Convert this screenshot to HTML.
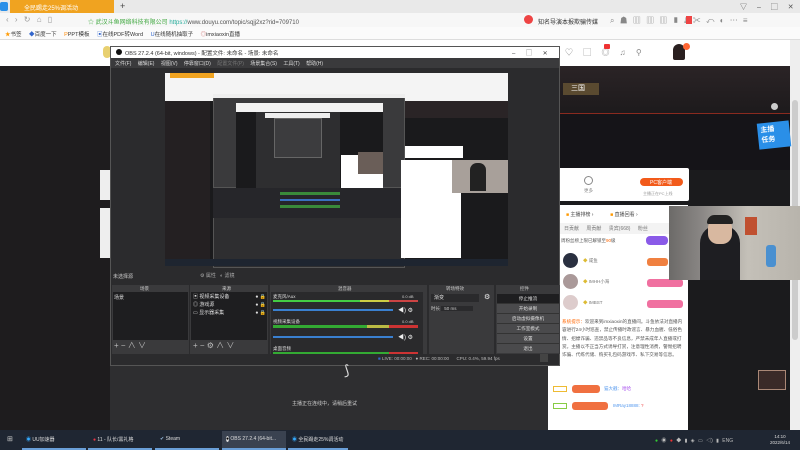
<!DOCTYPE html>
<html><head><meta charset="utf-8"><style>
*{margin:0;padding:0;box-sizing:border-box}
body{width:800px;height:450px;overflow:hidden;position:relative;background:#1b1b1d;font-family:"Liberation Sans","Noto Sans CJK SC",sans-serif;font-size:6px;color:#ccc}
.a{position:absolute}
.t{white-space:nowrap}
</style></head><body>
<!-- tab bar -->
<div class="a" style="left:0;top:0;width:800px;height:13px;background:#e9e9e9"></div>
<div class="a" style="left:0;top:2px;width:8px;height:9px;background:#2a8fe8;border-radius:2px"></div>
<div class="a t" style="left:10px;top:0;width:104px;height:13px;background:#f0a320;color:#fff;padding:3px 0 0 14px">全民踢走25%调活动</div>
<div class="a t" style="left:120px;top:1px;color:#444;font-size:9px">+</div>
<div class="a t" style="left:740px;top:2px;color:#555;font-size:7px;word-spacing:8px">▽ – ▢ ✕</div>
<!-- address bar -->
<div class="a" style="left:0;top:13px;width:800px;height:14px;background:#f7f7f7"></div>
<div class="a t" style="left:6px;top:15px;color:#999;font-size:8px;word-spacing:4px">‹ › ↻ ⌂ ▯</div>
<div class="a t" style="left:88px;top:17px;color:#4a4">☆ 武汉斗鱼网络科技有限公司 <span style="color:#2a9">https://</span><span style="color:#555">www.douyu.com/topic/sqjj2xz?rid=709710</span></div>
<div class="a" style="left:524px;top:15px;width:9px;height:9px;border-radius:50%;background:#e44"></div>
<div class="a t" style="left:538px;top:17px;color:#333">知名导演本报欺骗传媒</div>
<div class="a t" style="left:610px;top:15px;color:#888;font-size:8px;word-spacing:3px">⌕ ☗ ▥ ▥ ▥ ▮ ⤓ ✂ ↶ ◐ ⋯ ≡</div>
<div class="a" style="left:686px;top:16px;width:6px;height:8px;background:#e44"></div>
<!-- bookmarks -->
<div class="a" style="left:0;top:27px;width:800px;height:13px;background:#fbfbfb;border-bottom:1px solid #ddd"></div>
<div class="a t" style="left:5px;top:30px;color:#333;font-size:5.5px;word-spacing:6px"><span style="color:#f90">★</span>书签 <span style="color:#36c">◆</span>百度一下 <span style="color:#f80">P</span>PPT模板 <span style="color:#36c">▣</span>在线PDF转Word <span style="color:#36c">U</span>在线随机抽取子 <span style="color:#c66">◎</span>imxiaoxin直播</div>
<!-- douyu header -->
<div class="a" style="left:0;top:40px;width:790px;height:26px;background:#fff"></div>
<div class="a t" style="left:565px;top:47px;color:#888;font-size:8px;word-spacing:8px">♡ ▢ ◎ ♫ ⚲</div>
<div class="a" style="left:604px;top:44px;width:6px;height:5px;background:#e33;border-radius:1px"></div>
<div class="a" style="left:673px;top:44px;width:12px;height:16px;background:#2a2020;border-radius:6px 6px 2px 2px"></div>
<div class="a" style="left:683px;top:43px;width:7px;height:7px;background:#f63;border-radius:50%"></div>
<div class="a" style="left:790px;top:40px;width:10px;height:390px;background:#eee"></div>
<div class="a" style="left:792px;top:100px;width:6px;height:240px;background:#ccc;border-radius:3px"></div>
<div class="a" style="left:103px;top:46px;width:8px;height:12px;background:#e8d070;border-radius:4px"></div>
<!-- right douyu stream area -->
<div class="a" style="left:560px;top:66px;width:230px;height:104px;background:#151418"></div>
<div class="a" style="left:560px;top:66px;width:230px;height:48px;background:linear-gradient(#2b2426,#1d1a1c);border-bottom:1px solid #8a2a1f"></div>
<div class="a" style="left:563px;top:83px;width:36px;height:12px;background:#5a4a30;color:#fff;font-size:7px;padding-left:8px">三国</div>
<div class="a" style="left:771px;top:103px;width:7px;height:7px;background:#ccc;border-radius:50%"></div>
<div class="a" style="left:758px;top:122px;width:32px;height:26px;background:#2a8fe8;color:#fff;font-size:7px;font-weight:bold;line-height:10px;padding:3px;transform:rotate(-6deg)">主播<br>任务</div>
<div class="a" style="left:545px;top:168px;width:144px;height:33px;background:#fff;border-radius:2px"></div>
<div class="a" style="left:584px;top:176px;width:9px;height:9px;border:1px solid #888;border-radius:50%"></div>
<div class="a t" style="left:584px;top:188px;color:#888;font-size:4.5px">更多</div>
<div class="a t" style="left:640px;top:178px;width:43px;height:8px;background:#f25a1a;border-radius:4px;color:#fff;font-size:5px;padding:1px 0 0 10px">PC客户端</div>
<div class="a t" style="left:643px;top:191px;color:#999;font-size:4px">主播正在PC上线</div>
<!-- chat panel -->
<div class="a" style="left:548px;top:205px;width:140px;height:227px;background:#fff"></div>
<div class="a t" style="left:566px;top:211px;color:#444;font-size:5px"><span style="color:#f90">■</span> 主播排榜 ›&nbsp;&nbsp;&nbsp;&nbsp;&nbsp;&nbsp;&nbsp;&nbsp;&nbsp;&nbsp;&nbsp;&nbsp;<span style="color:#f90">■</span> 直播回看 ›</div>
<div class="a" style="left:560px;top:223px;width:128px;height:11px;background:#f3f3f3"></div>
<div class="a t" style="left:564px;top:225px;color:#777;font-size:5px;word-spacing:6px">日贡献 周贡献 贵宾(668) 粉丝</div>
<div class="a t" style="left:561px;top:238px;color:#555;font-size:4.5px">周粉丝榜上限已解锁至<span style="color:#f60">90</span>级</div>
<div class="a" style="left:646px;top:236px;width:22px;height:9px;background:#8a5ae8;border-radius:4px"></div>
<div class="a" style="left:563px;top:253px;width:15px;height:15px;border-radius:50%;background:#2a3040"></div>
<div class="a" style="left:563px;top:274px;width:15px;height:15px;border-radius:50%;background:#a99"></div>
<div class="a" style="left:563px;top:295px;width:15px;height:15px;border-radius:50%;background:#dcc"></div>
<div class="a t" style="left:583px;top:258px;color:#777;font-size:4.5px"><span style="color:#db3">◆</span> 咸鱼</div>
<div class="a t" style="left:583px;top:279px;color:#777;font-size:4.5px"><span style="color:#db3">◆</span> IMHH小海</div>
<div class="a t" style="left:583px;top:300px;color:#777;font-size:4.5px"><span style="color:#db3">◆</span> IMBST</div>
<div class="a" style="left:647px;top:258px;width:21px;height:8px;background:#f08040;border-radius:3px"></div>
<div class="a" style="left:647px;top:279px;width:36px;height:8px;background:#f070a0;border-radius:3px"></div>
<div class="a" style="left:647px;top:300px;width:36px;height:8px;background:#f070a0;border-radius:3px"></div>
<div class="a" style="left:562px;top:318px;width:124px;height:62px;color:#555;font-size:4.6px;line-height:8.3px"><span style="color:#f60">系统提示：</span>欢迎来到imxiaoxin的直播间。斗鱼依法对直播内容进行24小时巡查，禁止传播时政谣言、暴力血腥、低俗色情、招嫖诈骗、违禁品等不良信息，严禁未成年人直播或打赏。主播以不正当方式诱导打赏，注意理性消费，警惕招聘诈骗、代练代储、购买礼包码游戏币、私下交易等信息。</div>
<div class="a" style="left:553px;top:386px;width:14px;height:6px;border:1px solid #eb3;font-size:3px"></div>
<div class="a" style="left:572px;top:385px;width:28px;height:8px;background:#f07040;border-radius:3px"></div>
<div class="a t" style="left:604px;top:386px;color:#59e;font-size:4.5px">猫大戳：<span style="color:#a5e">哈哈</span></div>
<div class="a" style="left:553px;top:403px;width:14px;height:6px;border:1px solid #8c4"></div>
<div class="a" style="left:572px;top:402px;width:36px;height:8px;background:#f07040;border-radius:3px"></div>
<div class="a t" style="left:613px;top:403px;color:#59e;font-size:4.5px">IMRay18888: <span style="color:#e44">?</span></div>
<!-- webcam -->
<div class="a" style="left:669px;top:206px;width:131px;height:74px;background:linear-gradient(90deg,#6c6a68 0%,#8a8785 25%,#c4c0b8 60%,#b8b4ac 100%)"></div>
<div class="a" style="left:700px;top:225px;width:40px;height:55px;background:#1e1e22;border-radius:18px 18px 0 0"></div>
<div class="a" style="left:708px;top:218px;width:24px;height:26px;background:#d8b8a0;border-radius:10px"></div>
<div class="a" style="left:707px;top:215px;width:26px;height:9px;background:#222;border-radius:10px 10px 2px 2px"></div>
<div class="a" style="left:766px;top:245px;width:10px;height:22px;background:#4a90d0;border-radius:3px"></div>
<div class="a" style="left:745px;top:217px;width:12px;height:18px;background:#c05030"></div>
<div class="a" style="left:758px;top:370px;width:28px;height:20px;background:#3a2a28;border:1px solid #a87"></div>
<!-- left dark strip -->
<div class="a" style="left:0;top:66px;width:110px;height:364px;background:#1e1c1e"></div>
<div class="a" style="left:100px;top:170px;width:10px;height:30px;background:#eee"></div>
<div class="a" style="left:100px;top:208px;width:10px;height:50px;background:#eee"></div>
<!-- OBS window -->
<div class="a" style="left:110px;top:46px;width:450px;height:320px;background:#2b2b2d;border:1px solid #555"></div>
<div class="a" style="left:111px;top:47px;width:448px;height:11px;background:#fff"></div>
<div class="a" style="left:116px;top:49px;width:6px;height:6px;border-radius:50%;background:#111"></div>
<div class="a t" style="left:125px;top:49px;color:#333;font-size:5.5px">OBS 27.2.4 (64-bit, windows) - 配置文件: 未命名 - 场景: 未命名</div>
<div class="a t" style="left:512px;top:48px;color:#444;font-size:6px;word-spacing:9px">– ▢ ✕</div>
<div class="a" style="left:111px;top:58px;width:448px;height:10px;background:#3a3a3c"></div>
<div class="a t" style="left:115px;top:60px;color:#ddd;font-size:5px;word-spacing:5px">文件(F) 编辑(E) 视图(V) 停靠窗口(D) <span style="color:#777">配置文件(P)</span> 场景集合(S) 工具(T) 帮助(H)</div>
<!-- preview -->
<div class="a" style="left:165px;top:73px;width:343px;height:193px;background:#1a1a1c"></div>
<div class="a" style="left:165px;top:73px;width:343px;height:28px;background:#f4f4f4"></div>
<div class="a" style="left:170px;top:73px;width:44px;height:5px;background:#f0a320"></div>
<div class="a" style="left:165px;top:101px;width:45px;height:164px;background:#242022"></div>
<div class="a" style="left:213px;top:94px;width:192px;height:94px;background:#3a3a3c;border:1px solid #555"></div>
<div class="a" style="left:213px;top:94px;width:192px;height:4px;background:#eee"></div>
<div class="a" style="left:236px;top:103px;width:147px;height:102px;background:#1a1a1c"></div>
<div class="a" style="left:236px;top:103px;width:147px;height:9px;background:#f2f2f2"></div>
<div class="a" style="left:256px;top:112px;width:84px;height:80px;background:#2e2e30"></div>
<div class="a" style="left:265px;top:113px;width:65px;height:5px;background:#eee"></div>
<div class="a" style="left:274px;top:118px;width:48px;height:40px;background:#3c3c3e;border:1px solid #666"></div>
<div class="a" style="left:341px;top:155px;width:42px;height:50px;background:#fff"></div>
<div class="a" style="left:358px;top:152px;width:25px;height:22px;background:#6a5e58"></div>
<div class="a" style="left:213px;top:188px;width:192px;height:80px;background:#2e2e30;border:1px solid #555;border-top:0"></div>
<div class="a" style="left:213px;top:188px;width:192px;height:30px;background:#26262a"></div>
<div class="a" style="left:280px;top:192px;width:60px;height:3px;background:#3a8a3a"></div>
<div class="a" style="left:280px;top:199px;width:60px;height:2px;background:#3a70c0"></div>
<div class="a" style="left:280px;top:205px;width:60px;height:3px;background:#3a8a3a"></div>
<div class="a" style="left:405px;top:101px;width:103px;height:17px;background:#2a2426"></div>
<div class="a" style="left:405px;top:146px;width:58px;height:12px;background:#fff"></div>
<div class="a" style="left:401px;top:160px;width:60px;height:98px;background:#fff"></div>
<div class="a" style="left:452px;top:160px;width:56px;height:33px;background:#a8a09a"></div>
<div class="a" style="left:470px;top:163px;width:16px;height:28px;background:#222;border-radius:7px 7px 0 0"></div>
<div class="a" style="left:165px;top:259px;width:343px;height:7px;background:#1e2530"></div>
<!-- scene toolbar -->
<div class="a t" style="left:113px;top:273px;color:#ccc;font-size:5px">未选择源</div>
<div class="a t" style="left:200px;top:272px;color:#aaa;font-size:5px">⚙ 属性&nbsp;&nbsp;&nbsp;◐ 滤镜</div>
<!-- docks -->
<div class="a" style="left:112px;top:285px;width:77px;height:69px;background:#3a3a3c"></div>
<div class="a" style="left:113px;top:292px;width:75px;height:48px;background:#1e1e20"></div>
<div class="a t" style="left:140px;top:286px;font-size:4.5px">场景</div>
<div class="a t" style="left:114px;top:294px;font-size:5px;color:#ddd">场景</div>
<div class="a t" style="left:114px;top:340px;font-size:8px;color:#bbb">+ − ∧ ∨</div>
<div class="a" style="left:190px;top:285px;width:78px;height:69px;background:#3a3a3c"></div>
<div class="a" style="left:191px;top:292px;width:76px;height:48px;background:#1e1e20"></div>
<div class="a t" style="left:222px;top:286px;font-size:4.5px">来源</div>
<div class="a" style="left:193px;top:293px;width:73px;line-height:8px;font-size:5px;color:#ddd">▣ 视频采集设备 <span style="float:right">● 🔒</span><br>◎ 游戏源 <span style="float:right">● 🔒</span><br>▭ 显示器采集 <span style="float:right">● 🔒</span></div>
<div class="a t" style="left:193px;top:340px;font-size:8px;color:#bbb">+ − ⚙ ∧ ∨</div>
<div class="a" style="left:270px;top:285px;width:157px;height:69px;background:#3a3a3c"></div>
<div class="a" style="left:271px;top:292px;width:152px;height:62px;background:#2a2a2c"></div>
<div class="a t" style="left:338px;top:286px;font-size:4.5px">混音器</div>
<div class="a t" style="left:273px;top:294px;font-size:4.5px;color:#ddd">麦克风/Aux</div>
<div class="a t" style="left:402px;top:294px;font-size:4px">0.0 dB</div>
<div class="a" style="left:273px;top:300px;width:145px;height:2px;background:linear-gradient(90deg,#4c4 0,#4c4 60%,#cc4 60%,#cc4 80%,#c44 80%)"></div>
<div class="a" style="left:273px;top:309px;width:120px;height:2px;background:#3a80d0"></div>
<div class="a t" style="left:398px;top:305px;font-size:6px;color:#eee">◀) ⚙</div>
<div class="a t" style="left:273px;top:319px;font-size:4.5px;color:#ddd">视频采集设备</div>
<div class="a t" style="left:402px;top:319px;font-size:4px">0.0 dB</div>
<div class="a" style="left:273px;top:325px;width:145px;height:3px;background:linear-gradient(90deg,#3a3 0,#3a3 65%,#bb4 65%,#bb4 80%,#c33 80%)"></div>
<div class="a" style="left:273px;top:336px;width:120px;height:2px;background:#3a80d0"></div>
<div class="a t" style="left:398px;top:332px;font-size:6px;color:#eee">◀) ⚙</div>
<div class="a t" style="left:273px;top:346px;font-size:4.5px;color:#ddd">桌面音频</div>
<div class="a" style="left:273px;top:352px;width:145px;height:2px;background:linear-gradient(90deg,#3a3 0,#3a3 80%,#c33 80%)"></div>
<div class="a" style="left:429px;top:285px;width:65px;height:69px;background:#3a3a3c"></div>
<div class="a t" style="left:446px;top:286px;font-size:4.5px">转场特效</div>
<div class="a" style="left:431px;top:294px;width:48px;height:8px;background:#2a2a2c;font-size:5px;color:#ddd;padding-left:3px">渐变</div>
<div class="a t" style="left:484px;top:293px;font-size:7px;color:#eee">⚙</div>
<div class="a t" style="left:431px;top:306px;font-size:4.5px">时长 <span style="background:#2a2a2c;padding:0 16px 0 3px">50 ms</span></div>
<div class="a" style="left:496px;top:285px;width:64px;height:69px;background:#3a3a3c"></div>
<div class="a t" style="left:520px;top:286px;font-size:4.5px">控件</div>
<div class="a" style="left:497px;top:294px;width:62px;line-height:9px;font-size:4.6px;color:#ddd;text-align:center"><div style="background:#1e1e20">停止推流</div><div style="background:#4a4a4c;border-top:1px solid #333">开始录制</div><div style="background:#4a4a4c;border-top:1px solid #333">启动虚拟摄像机</div><div style="background:#4a4a4c;border-top:1px solid #333">工作室模式</div><div style="background:#4a4a4c;border-top:1px solid #333">设置</div><div style="background:#4a4a4c;border-top:1px solid #333">退出</div></div>
<div class="a t" style="left:378px;top:356px;font-size:4.5px;color:#bbb"><span style="color:#36c">■</span> LIVE: 00:00:00 &nbsp; ● REC: 00:00:00 &nbsp;&nbsp;&nbsp;&nbsp; CPU: 0.4%, 59.94 fps</div>
<div class="a" style="left:540px;top:354px;width:8px;height:8px;background:#444"></div>
<!-- lower dark area -->
<div class="a" style="left:110px;top:366px;width:438px;height:64px;background:#2e2e30"></div>
<div class="a t" style="left:344px;top:362px;font-size:14px;color:#ddd">⟆</div>
<div class="a t" style="left:292px;top:400px;font-size:5px;color:#ccc">主播正在连线中，请稍后重试</div>
<!-- taskbar -->
<div class="a" style="left:0;top:430px;width:800px;height:20px;background:#1f2632"></div>
<div class="a t" style="left:7px;top:435px;color:#ccc;font-size:7px">⊞</div>
<div class="a" style="left:22px;top:448px;width:64px;height:2px;background:#6a9fd8"></div>
<div class="a" style="left:88px;top:448px;width:64px;height:2px;background:#6a9fd8"></div>
<div class="a" style="left:155px;top:448px;width:64px;height:2px;background:#6a9fd8"></div>
<div class="a" style="left:222px;top:431px;width:64px;height:19px;background:#3a4250;border-bottom:2px solid #6a9fd8"></div>
<div class="a" style="left:288px;top:448px;width:60px;height:2px;background:#6a9fd8"></div>
<div class="a t" style="left:26px;top:436px;color:#ddd;font-size:5px"><span style="color:#3af">◉</span> UU加速器</div>
<div class="a t" style="left:93px;top:436px;color:#ddd;font-size:5px"><span style="color:#e34">●</span> 11 - 队长/黑礼格</div>
<div class="a t" style="left:160px;top:436px;color:#ddd;font-size:5px"><span style="color:#9bd">✔</span> Steam</div>
<div class="a t" style="left:226px;top:436px;color:#ddd;font-size:5px"><span style="color:#000;background:#ddd;border-radius:50%">●</span> OBS 27.2.4 (64-bit...</div>
<div class="a t" style="left:292px;top:436px;color:#ddd;font-size:5px"><span style="color:#3af">◉</span> 全民踢走25%调活动</div>
<div class="a t" style="left:655px;top:437px;color:#bbb;font-size:5px;word-spacing:2px"><span style="color:#3c3">●</span> ◉ <span style="color:#e33">●</span> ◆ ▮ ◈ ▭ ◁) ▮ ENG</div>
<div class="a t" style="left:770px;top:434px;color:#ddd;font-size:4.5px;line-height:6px;text-align:center">14:10<br>2022/6/14</div>
</body></html>
